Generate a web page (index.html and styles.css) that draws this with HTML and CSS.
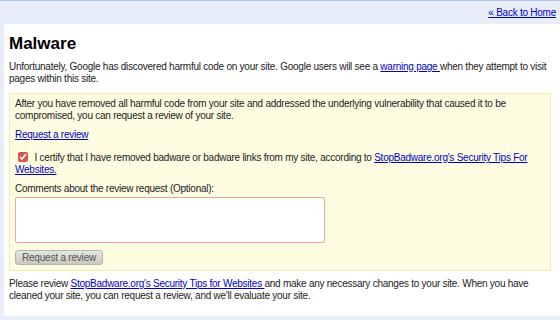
FILE: index.html
```html
<!DOCTYPE html>
<html lang="en">
<head>
    <meta charset="UTF-8">
    <title>Malware</title>
    <link rel="stylesheet" href="styles.css">
</head>
<body>
    <div class="topbar">
        <a href="#">&laquo; Back to Home</a>
    </div>
    <div class="page">
        <h1 class="title">Malware</h1>
        <p class="intro">
            Unfortunately, Google has discovered harmful code on your site. Google users will see a <a href="#">warning page </a>when they attempt to visit pages within this site.
        </p>

        <!-- review request box -->
        <div class="review-box">
            <p>After you have removed all harmful code from your site and addressed the underlying vulnerability that caused it to be compromised, you can request a review of your site.</p>
            <p class="request-link"><a href="#">Request a review</a></p>
            <p class="certify">
                <input type="checkbox" checked>
                I certify that I have removed badware or badware links from my site, according to <a href="#">StopBadware.org's Security Tips For Websites.</a>
            </p>
            <label class="comments-label">Comments about the review request (Optional):</label>
            <textarea class="comments"></textarea>
            <button class="review-button" disabled>Request a review</button>
        </div>

        <p class="outro">
            Please review <a href="#">StopBadware.org's Security Tips for Websites </a>and make any necessary changes to your site. When you have cleaned your site, you can request a review, and we'll evaluate your site.
        </p>
    </div>
</body>
</html>
```

FILE: styles.css
```css
body {
    margin: 0;
    background-color: #e8eef9;
    font-family: "Liberation Sans", Arial, sans-serif;
    font-size: 10px;
    letter-spacing: -0.25px;
    line-height: 12px;
    color: #222;
}

a {
    color: #00c;
}

.topbar {
    height: 23px;
    border-top: 1px solid #aec3ea;
    display: flex;
    align-items: center;
    justify-content: flex-end;
    padding-right: 4px;
}

.page {
    margin-left: 4px;
    height: 292px;
    background-color: #fff;
    padding: 10px 5px 0 5px;
    box-sizing: border-box;
}

.title {
    margin: 0;
    font-size: 17px;
    line-height: 20px;
    letter-spacing: 0;
    color: #000;
}

.intro {
    margin: 7px 0 0 0;
}

.review-box {
    margin: 8px 4px 0 0;
    background-color: #fefde2;
    border: 1px solid #f7ecae;
    padding: 4px 5px 5px 5px;
}

.review-box p {
    margin: 0;
}

.review-box .request-link {
    margin-top: 7px;
}

.review-box .certify {
    margin-top: 11px;
}

.certify input {
    margin: 0 4px 0 3px;
    width: 10px;
    height: 10px;
    vertical-align: -1px;
    accent-color: #d9574a;
}

.comments-label {
    display: block;
    margin-top: 7px;
}

.comments {
    display: block;
    width: 310px;
    height: 46px;
    margin-top: 2px;
    border: 1px solid #f4a393;
    border-radius: 2px;
    box-sizing: border-box;
    resize: none;
}

.review-button {
    display: block;
    margin-top: 7px;
    width: 88px;
    height: 15px;
    padding: 0;
    font-family: inherit;
    font-size: 10px;
    letter-spacing: -0.2px;
    color: #555;
    border: 1px solid #b6b4aa;
    border-radius: 3px;
    background: linear-gradient(#e6e5df, #cac8be);
}

.outro {
    margin: 7px 0 0 0;
}
```
